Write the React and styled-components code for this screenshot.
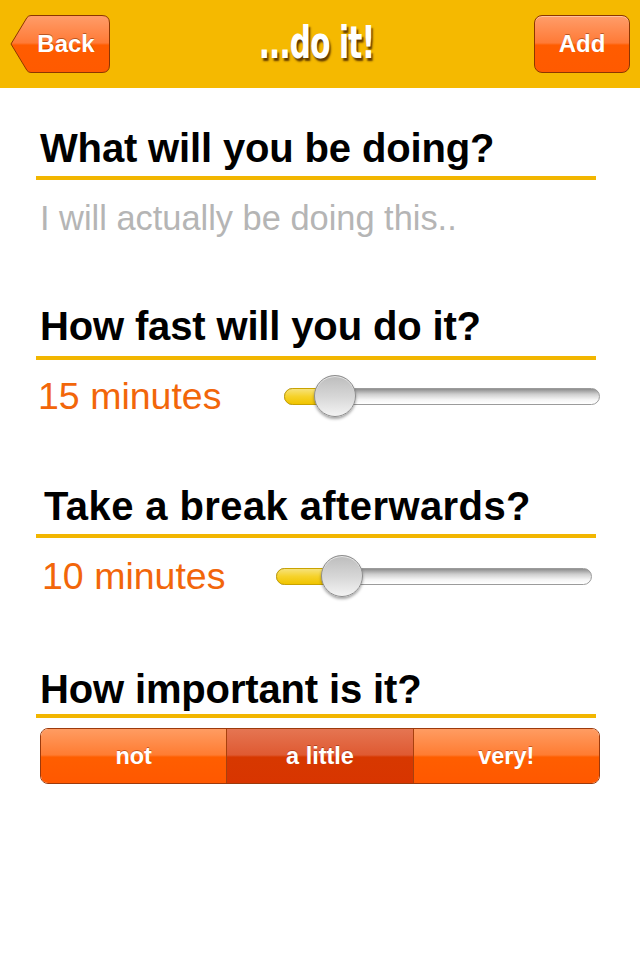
import React, { useState } from 'react';
import styled, { createGlobalStyle } from 'styled-components';

const GlobalStyle = createGlobalStyle`
  html, body {
    margin: 0;
    padding: 0;
    background: #ffffff;
  }
  body {
    width: 640px;
    height: 960px;
    overflow: hidden;
    font-family: "Liberation Sans", Arial, sans-serif;
  }
`;

const Screen = styled.div`
  width: 640px;
  height: 960px;
  background: #ffffff;
`;

const NavBar = styled.header`
  height: 88px;
  background: #f5b900;
  display: grid;
  grid-template-columns: 1fr auto 1fr;
  align-items: center;
  padding: 0 10px;
  box-sizing: border-box;
`;

const Title = styled.h1`
  margin: 0;
  font-family: "DejaVu Sans Condensed", "Liberation Sans Narrow", sans-serif;
  font-weight: bold;
  font-size: 40px;
  letter-spacing: -1px;
  color: #ffffff;
  transform: translate(-4px, -2px) scale(0.82, 1.12);
  text-shadow: 2px 3px 2px rgba(70, 35, 0, 0.85);
`;

const BackButton = styled.button`
  justify-self: start;
  display: grid;
  width: 100px;
  height: 58px;
  padding: 0;
  border: 0;
  background: transparent;
  cursor: pointer;
  svg,
  span {
    grid-area: 1 / 1;
  }
  span {
    align-self: center;
    padding-left: 12px;
  }
`;

const BtnLabel = styled.span`
  font-family: "Liberation Sans", Arial, sans-serif;
  font-weight: bold;
  font-size: 24px;
  color: #ffffff;
  text-shadow: 0 -1px 0 rgba(120, 40, 0, 0.5);
`;

const AddButton = styled.button`
  justify-self: end;
  width: 96px;
  height: 58px;
  padding: 0;
  border: 1px solid #8c3600;
  border-radius: 8px;
  background: linear-gradient(#ff9d6a 0%, #ff7a36 48%, #ff5c00 52%, #ff5a00 100%);
  box-shadow: inset 0 1px 0 rgba(255, 210, 180, 0.7);
  cursor: pointer;
`;

const Form = styled.main`
  display: flex;
  flex-direction: column;
  padding: 0 44px 0 36px;
`;

const Section = styled.section`
  margin-top: ${(p) => p.$top}px;
  display: flex;
  flex-direction: column;
`;

const Heading = styled.h2`
  margin: 0;
  padding: 0 0 ${(p) => p.$pad ?? 6}px ${(p) => p.$indent ?? 4}px;
  font-size: 40px;
  line-height: 44px;
  font-weight: bold;
  letter-spacing: ${(p) => p.$spacing ?? -0.15}px;
  color: #000000;
  white-space: nowrap;
  border-bottom: 4px solid #f2b600;
`;

const Placeholder = styled.input`
  margin-top: 18px;
  margin-left: 4px;
  border: 0;
  outline: none;
  padding: 0;
  height: 40px;
  font-family: "Liberation Sans", Arial, sans-serif;
  font-size: 34.4px;
  color: #222;
  background: transparent;
  &::placeholder {
    color: #b5b5b5;
  }
`;

const SliderRow = styled.div`
  margin: ${(p) => p.$top}px ${(p) => p.$right}px 0 0;
  height: 44px;
  display: flex;
  align-items: center;
  padding-left: ${(p) => p.$indent}px;
`;

const Minutes = styled.span`
  flex: 0 0 ${(p) => p.$width}px;
  font-size: 37.5px;
  color: #f2660a;
`;

const Track = styled.div`
  position: relative;
  flex: 0 0 316px;
  height: 17px;
  box-sizing: border-box;
  border: 1px solid #9b9b9b;
  border-radius: 9px;
  background: linear-gradient(#8e8e8e 0%, #cfcfcf 35%, #f4f4f4 70%, #ffffff 100%);
`;

const Fill = styled.div`
  height: 100%;
  margin: -1px 0 0 -1px;
  border: 1px solid #c9a300;
  border-radius: 9px;
  background: linear-gradient(#f6e27a 0%, #f6d22a 50%, #f0c400 100%);
`;

const Thumb = styled.div`
  position: absolute;
  top: 50%;
  width: 42px;
  height: 42px;
  margin: -21px 0 0 -21px;
  box-sizing: border-box;
  border-radius: 50%;
  border: 1px solid #8d8d8d;
  background: linear-gradient(#bdbdbd 0%, #d6d6d6 50%, #f3f3f3 100%);
  box-shadow: 0 2px 3px rgba(0, 0, 0, 0.35), inset 0 1px 0 rgba(255, 255, 255, 0.6);
`;

const Segmented = styled.div`
  margin: 10px -4px 0 4px;
  height: 56px;
  display: flex;
  box-sizing: border-box;
  border: 1px solid #9c3a0c;
  border-radius: 8px;
  overflow: hidden;
`;

const Segment = styled.button`
  flex: 1;
  border: 0;
  border-right: 1px solid #a8400e;
  padding: 0;
  font-family: "Liberation Sans", Arial, sans-serif;
  font-weight: bold;
  font-size: 23.5px;
  color: #ffffff;
  text-shadow: 0 -1px 0 rgba(120, 30, 0, 0.45);
  cursor: pointer;
  background: ${(p) =>
    p.$active
      ? 'linear-gradient(#e57552 0%, #df5a32 48%, #d73800 52%, #d83500 100%)'
      : 'linear-gradient(#ff9c62 0%, #ff7c32 48%, #ff5e00 52%, #ff5800 100%)'};
  &:last-child {
    border-right: 0;
  }
`;

function BackShape() {
  return (
    <svg width="100" height="58" viewBox="0 0 100 58">
      <defs>
        <linearGradient id="backGrad" x1="0" y1="0" x2="0" y2="1">
          <stop offset="0" stopColor="#ff9d6a" />
          <stop offset="0.48" stopColor="#ff7a36" />
          <stop offset="0.52" stopColor="#ff5c00" />
          <stop offset="1" stopColor="#ff5a00" />
        </linearGradient>
      </defs>
      <path
        d="M1 29 L17 2.5 Q18.5 0.5 21 0.5 H92 Q99.5 0.5 99.5 8 V50 Q99.5 57.5 92 57.5 H21 Q18.5 57.5 17 55.5 Z"
        fill="url(#backGrad)"
        stroke="#8c3600"
        strokeWidth="1"
      />
    </svg>
  );
}

function Slider({ value, max, indent, labelWidth, top, right }) {
  const pct = (value / max) * 100;
  return (
    <SliderRow $indent={indent} $top={top} $right={right}>
      <Minutes $width={labelWidth}>{value} minutes</Minutes>
      <Track>
        <Fill style={{ width: `calc(${pct}% + 2px)` }} />
        <Thumb style={{ left: `${pct}%` }} />
      </Track>
    </SliderRow>
  );
}

export default function App() {
  const [importance, setImportance] = useState('a little');

  return (
    <Screen>
      <GlobalStyle />
      <NavBar>
        <BackButton>
          <BackShape />
          <BtnLabel>Back</BtnLabel>
        </BackButton>
        <Title>...do it!</Title>
        <AddButton>
          <BtnLabel>Add</BtnLabel>
        </AddButton>
      </NavBar>

      <Form>
        <Section $top={38}>
          <Heading>What will you be doing?</Heading>
          <Placeholder placeholder="I will actually be doing this.." />
        </Section>

        <Section $top={66}>
          <Heading $pad={8}>How fast will you do it?</Heading>
          <Slider value={15} max={95} indent={2} labelWidth={246} top={14} right={-4} />
        </Section>

        <Section $top={66}>
          <Heading $indent={8} $spacing={0.4}>Take a break afterwards?</Heading>
          <Slider value={10} max={48} indent={6} labelWidth={234} top={16} right={4} />
        </Section>

        <Section $top={69}>
          <Heading $pad={3}>How important is it?</Heading>
          <Segmented>
            {['not', 'a little', 'very!'].map((label) => (
              <Segment
                key={label}
                $active={importance === label}
                onClick={() => setImportance(label)}
              >
                {label}
              </Segment>
            ))}
          </Segmented>
        </Section>
      </Form>
    </Screen>
  );
}
